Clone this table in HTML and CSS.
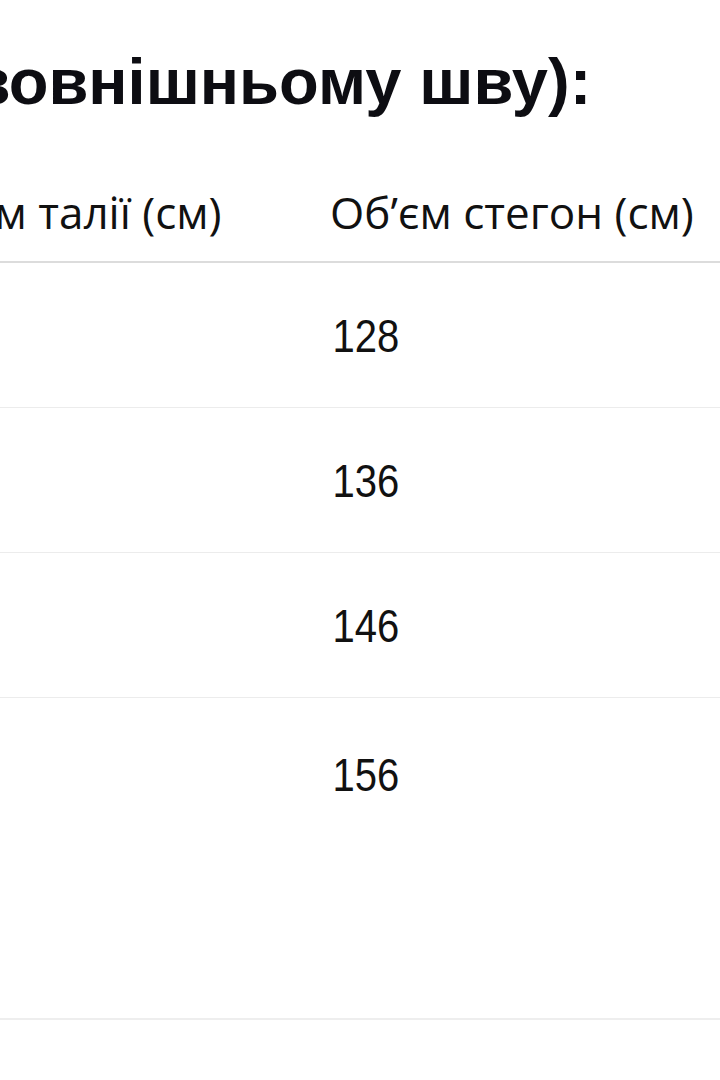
FILE: index.html
```html
<!DOCTYPE html>
<html lang="uk">
<head>
<meta charset="utf-8">
<title>Розмірна сітка</title>
<link rel="stylesheet" href="styles.css">
</head>
<body>
<div class="page">
  <h2 class="title">зовнішньому шву):</h2>
  <div class="table">
    <div class="row head">
      <div class="cell c1"><span class="clip">Об’єм талії (см)</span></div>
      <div class="cell c2">Об’єм стегон (см)</div>
    </div>
    <div class="row">
      <div class="cell c1"></div>
      <div class="cell c2"><span class="num">128</span></div>
    </div>
    <div class="row">
      <div class="cell c1"></div>
      <div class="cell c2"><span class="num">136</span></div>
    </div>
    <div class="row">
      <div class="cell c1"></div>
      <div class="cell c2"><span class="num">146</span></div>
    </div>
    <div class="row last">
      <div class="cell c1"></div>
      <div class="cell c2"><span class="num">156</span></div>
    </div>
  </div>
</div>
</body>
</html>
```
FILE: styles.css
```css
html, body {
  margin: 0;
  padding: 0;
  background: #ffffff;
}
body {
  width: 720px;
  height: 1080px;
  overflow: hidden;
  color: #111111;
  font-family: "Open Sans", "Liberation Sans", sans-serif;
}
.page {
  width: 720px;
  overflow: hidden;
}
.title {
  margin: 0 0 0 -22px;
  padding-top: 50px;
  height: 161px;
  box-sizing: border-box;
  font-family: "Liberation Sans", Arial, sans-serif;
  font-weight: 700;
  font-size: 65px;
  line-height: 64px;
  white-space: nowrap;
  color: #0d0d12;
}
.table {
  display: flex;
  flex-direction: column;
}
.row {
  display: grid;
  grid-template-columns: 330px 390px;
  height: 144px;
  border-bottom: 1px solid #ececec;
  align-items: center;
}
.row.head {
  height: 100px;
  border-bottom: 2px solid #dcdcdc;
}
.row.last {
  height: 320px;
  align-items: start;
  border-bottom: 2px solid #eeeeee;
}
.cell {
  font-size: 44px;
  white-space: nowrap;
  overflow: hidden;
}
.head .cell {
  padding-top: 2px;
}
.clip {
  display: inline-block;
  margin-left: -95px;
}
.num {
  display: inline-block;
  font-family: "Liberation Sans", Arial, sans-serif;
  font-size: 46px;
  padding-left: 3px;
  transform: scaleX(0.87);
  transform-origin: left center;
}
.last .num {
  padding-top: 50px;
}
```
